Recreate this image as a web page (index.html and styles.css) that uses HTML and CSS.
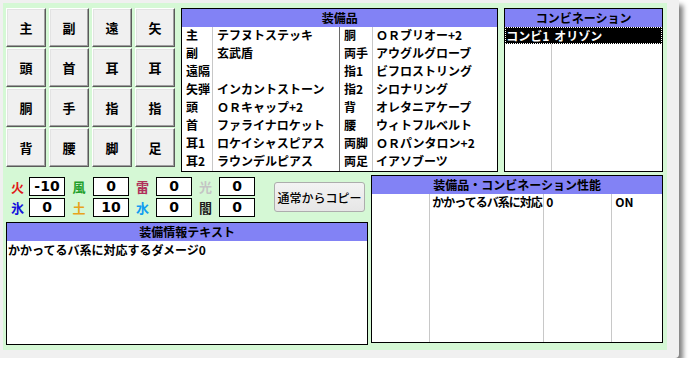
FILE: index.html
```html
<!DOCTYPE html>
<html>
<head>
<meta charset="utf-8">
<title>装備セット</title>
<link rel="stylesheet" href="styles.css">
</head>
<body>
<div class="window">
  <div class="panel">

    <div class="top">
      <div class="slots">
        <button class="slot">主</button>
        <button class="slot">副</button>
        <button class="slot">遠</button>
        <button class="slot">矢</button>
        <button class="slot">頭</button>
        <button class="slot">首</button>
        <button class="slot">耳</button>
        <button class="slot">耳</button>
        <button class="slot">胴</button>
        <button class="slot">手</button>
        <button class="slot">指</button>
        <button class="slot">指</button>
        <button class="slot">背</button>
        <button class="slot">腰</button>
        <button class="slot">脚</button>
        <button class="slot">足</button>
      </div>

      <div class="list equip">
        <div class="list-head">装備品</div>
        <div class="rows equip-rows">
          <div class="row"><span class="k">主</span><span class="v">テフヌトステッキ</span><span class="k2">胴</span><span class="v2">ＯＲブリオー+2</span></div>
          <div class="row"><span class="k">副</span><span class="v">玄武盾</span><span class="k2">両手</span><span class="v2">アウグルグローブ</span></div>
          <div class="row"><span class="k">遠隔</span><span class="v"></span><span class="k2">指1</span><span class="v2">ビフロストリング</span></div>
          <div class="row"><span class="k">矢弾</span><span class="v">インカントストーン</span><span class="k2">指2</span><span class="v2">シロナリング</span></div>
          <div class="row"><span class="k">頭</span><span class="v">ＯＲキャップ+2</span><span class="k2">背</span><span class="v2">オレタニアケープ</span></div>
          <div class="row"><span class="k">首</span><span class="v">ファライナロケット</span><span class="k2">腰</span><span class="v2">ウィトフルベルト</span></div>
          <div class="row"><span class="k">耳1</span><span class="v">ロケイシャスピアス</span><span class="k2">両脚</span><span class="v2">ＯＲパンタロン+2</span></div>
          <div class="row"><span class="k">耳2</span><span class="v">ラウンデルピアス</span><span class="k2">両足</span><span class="v2">イアソブーツ</span></div>
        </div>
      </div>

      <div class="list combo">
        <div class="list-head">コンビネーション</div>
        <div class="rows combo-rows">
          <div class="row selected"><span class="c1">コンビ1</span><span class="c2">オリゾン</span></div>
        </div>
      </div>
    </div>

    <div class="bottom">
      <div class="left">
        <div class="elem-row">
          <div class="elems">
            <span class="el fire">火</span><span class="val">-10</span>
            <span class="el wind">風</span><span class="val">0</span>
            <span class="el thunder">雷</span><span class="val">0</span>
            <span class="el light">光</span><span class="val">0</span>
            <span class="el ice">氷</span><span class="val">0</span>
            <span class="el earth">土</span><span class="val">10</span>
            <span class="el water">水</span><span class="val">0</span>
            <span class="el dark">闇</span><span class="val">0</span>
          </div>
          <button class="copy">通常からコピー</button>
        </div>

        <div class="list info">
          <div class="list-head">装備情報テキスト</div>
          <div class="info-text">かかってるバ系に対応するダメージ0</div>
        </div>
      </div>

      <div class="list perf">
        <div class="list-head">装備品・コンビネーション性能</div>
        <div class="rows perf-rows">
          <div class="row"><span class="p1"></span><span class="p2">かかってるバ系に対応</span><span class="p3">0</span><span class="p4">ON</span></div>
        </div>
      </div>
    </div>

  </div>
</div>
</body>
</html>
```

FILE: styles.css
```css
body {
  margin: 0;
  background: #fff;
  font-family: "Noto Sans CJK JP", sans-serif;
  font-size: 12px;
  font-weight: bold;
  color: #000;
}

.window {
  width: 664px;
  height: 347px;
  padding: 3px 12px 8px 3px;
  background: #f0f0f0;
  border-radius: 0 0 4px 0;
  box-shadow: 4px 5px 5px rgba(0, 0, 0, 0.5);
}

.panel {
  width: 664px;
  height: 347px;
  box-sizing: border-box;
  padding: 5px 4px 5px 3px;
  background: #d5f8d5;
  display: flex;
  flex-direction: column;
}

/* top row */
.top {
  display: flex;
  gap: 6px;
  height: 164px;
}

.slots {
  display: grid;
  grid-template-columns: repeat(4, 40px);
  grid-auto-rows: 39px;
  column-gap: 3px;
  row-gap: 1px;
  align-content: start;
}

.slot {
  font: inherit;
  font-size: 13px;
  padding: 0;
  background: #f0f0f0;
  border: 1px solid;
  border-color: #fff #5a5a5a #5a5a5a #fff;
  box-shadow: inset -1px -1px #a0a0a0, inset 1px 1px #e3e3e3;
}

.list {
  box-sizing: border-box;
  background: #fff;
  border: 1px solid #000;
  display: flex;
  flex-direction: column;
}

.list-head {
  height: 18px;
  line-height: 18px;
  background: #8282f5;
  text-align: center;
}

.rows {
  flex: 1;
  background-repeat: no-repeat;
  background-size: 1px 100%;
}

.row {
  display: flex;
  height: 18px;
  line-height: 16px;
}

.row span {
  box-sizing: border-box;
  white-space: nowrap;
  overflow: hidden;
}

/* equipment */
.equip {
  width: 318px;
}

.equip-rows {
  background-image: linear-gradient(#c8c8c8, #c8c8c8), linear-gradient(#6a6a6a, #6a6a6a), linear-gradient(#c8c8c8, #c8c8c8);
  background-position: 30px 0, 157px 0, 190px 0;
}

.equip-rows .k { width: 31px; padding-left: 4px; }
.equip-rows .v { width: 127px; padding-left: 4px; }
.equip-rows .k2 { width: 33px; padding-left: 4px; }
.equip-rows .v2 { flex: 1; padding-left: 3px; }

/* combination */
.combo {
  width: 159px;
}

.combo-rows {
  background-image: linear-gradient(#c8c8c8, #c8c8c8);
  background-position: 46px 0;
}

.combo-rows .row {
  height: 17px;
  line-height: 17px;
}

.selected {
  background: #000;
  color: #fff;
  outline: 1px dotted #fff;
  outline-offset: -1px;
}

.combo-rows .c1 { width: 47px; padding-left: 1px; }
.combo-rows .c2 { flex: 1; padding-left: 2px; }

/* bottom row */
.bottom {
  display: flex;
  gap: 3px;
  margin-top: 3px;
  height: 170px;
}

.left {
  width: 364px;
  padding-top: 2px;
  display: flex;
  flex-direction: column;
}

.elem-row {
  display: flex;
  align-items: center;
}

.elems {
  display: grid;
  grid-template-columns: 23px 36px 28px 36px 27px 36px 27px 36px;
  grid-auto-rows: 19px;
  row-gap: 2px;
}

.el {
  text-align: center;
  font-size: 13px;
  line-height: 19px;
}

.fire { color: #e01818; }
.wind { color: #1f9f2a; }
.thunder { color: #b0305a; }
.light { color: #c4c4c4; }
.ice { color: #1414dc; }
.earth { color: #e8a31c; }
.water { color: #109cf0; }
.dark { color: #1c1c1c; }

.val {
  box-sizing: border-box;
  border: 1px solid #000;
  background: #fff;
  text-align: center;
  font-family: "DejaVu Sans", sans-serif;
  font-size: 14px;
  line-height: 17px;
}

.copy {
  margin-left: 19px;
  width: 91px;
  height: 30px;
  padding: 0;
  font: inherit;
  font-weight: 500;
  color: #000;
  background: linear-gradient(#f3f3f3, #e6e6e6);
  border: 1px solid #adadad;
  border-radius: 3px;
}

.info {
  margin-top: 5px;
  flex: 1;
}

.info-text {
  padding-left: 1px;
  line-height: 18px;
}

/* performance */
.perf {
  width: 293px;
  height: 168px;
}

.perf-rows {
  background-image: linear-gradient(#c8c8c8, #c8c8c8), linear-gradient(#c8c8c8, #c8c8c8), linear-gradient(#c8c8c8, #c8c8c8);
  background-position: 57px 0, 171px 0, 239px 0;
}

.perf-rows .p1 { width: 58px; }
.perf-rows .p2 { width: 114px; padding-left: 2px; letter-spacing: -1px; }
.perf-rows .p3 { width: 68px; padding-left: 2px; }
.perf-rows .p4 { flex: 1; padding-left: 3px; }
```
